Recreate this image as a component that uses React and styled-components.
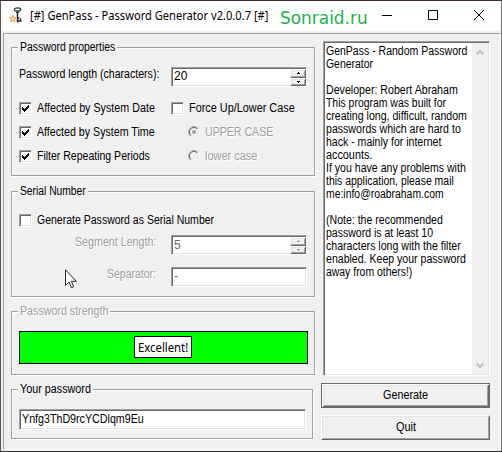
import { useLayoutEffect, useRef, useState } from "react"
import styled, { createGlobalStyle, css } from "styled-components"

//#region styled
const GlobalStyle = createGlobalStyle`
  * {
    box-sizing: border-box;
  }

  body {
    margin: 0;
    font-family: "Liberation Sans", Arial, sans-serif;
    font-size: 12px;
    line-height: 13px;
    color: #000;
    cursor: default;
  }
`

const sunken = css`
  border: 1px solid;
  border-color: #a0a0a0 #fff #fff #a0a0a0;
  box-shadow: inset 1px 1px #696969, inset -1px -1px #e3e3e3;
`

const raised = css`
  border: 1px solid;
  border-color: #fff #696969 #696969 #fff;
  box-shadow: inset 1px 1px #e3e3e3, inset -1px -1px #a0a0a0;
`

const Window = styled.div`
  position: relative;
  display: flex;
  flex-direction: column;
  width: 502px;
  height: 452px;
  border: 1px solid;
  border-color: #3a2a29 #707070 #34292d #6b4e49;
  background: #f0f0f0;
`

const TitleBar = styled.header`
  display: flex;
  height: 30px;
  flex: none;
  padding-left: 8px;
  background: #fff;
`

const TitleIcon = styled.svg`
  width: 16px;
  height: 17px;
  margin: 6px 5px 0 0;
`

const Title = styled.div`
  width: 250px;
  padding-top: 6px;
  font-family: "Noto Sans", "Open Sans", sans-serif;
  font-size: 12px;
  line-height: 17px;
`

const Site = styled.div`
  width: 101px;
  padding-top: 5px;
  font-family: "DejaVu Sans", Verdana, sans-serif;
  font-size: 17.5px;
  line-height: 24px;
  color: #22b14c;
`

const Controls = styled.svg`
  width: 104px;
  height: 12px;
  margin-top: 8px;
`

const Client = styled.main`
  display: flex;
  flex: 1;
  margin: 2px 0 1px 2px;
  padding-left: 7px;
  border: 1px solid;
  border-color: #a0a0a0 #fff #fff #a0a0a0;
`

const Settings = styled.div`
  width: 310px;
  padding-top: 13px;
`

const Side = styled.div`
  display: flex;
  flex-direction: column;
  align-items: flex-end;
  width: 169px;
  padding-top: 7px;
`

const Group = styled.section`
  width: ${p => p.$width || 304}px;
  height: ${p => p.$height}px;
  margin-bottom: ${p => p.$gap || 0}px;
  padding-left: 7px;
  border: 1px solid #a0a0a0;
  box-shadow: 1px 1px #fff, inset 1px 1px #fff;
`

const Legend = styled.h2`
  width: fit-content;
  height: 14px;
  margin: -8px 0 ${p => p.$gap}px -1px;
  padding: 1px 2px 0;
  font: inherit;
  background: #f0f0f0;
`

const Ink = styled.span`
  display: inline-block;
  width: ${p => p.$width}px;
  height: 13px;
  white-space: pre;
  flex: none;
  color: ${p => (p.$disabled ? "#a0a0a0" : "inherit")};
  text-shadow: ${p => (p.$disabled ? "1px 1px #fff" : "none")};
`

const Glyphs = styled.span`
  display: inline-block;
  transform-origin: 0 50%;
`

const Field = styled.div`
  display: flex;
  height: 20px;
  margin-bottom: ${p => p.$gap || 0}px;
`

const FieldLabel = styled.div`
  display: flex;
  justify-content: ${p => (p.$right ? "flex-end" : "flex-start")};
  width: 152px;
  padding: ${p => (p.$right ? "1px 15px 0 0" : "1px 0 0 0")};
`

const Input = styled.div`
  display: flex;
  justify-content: space-between;
  width: ${p => p.$width || 136}px;
  height: ${p => p.$height || 20}px;
  padding: ${p => p.$top || 2}px 0 0 2px;
  background: #fff;
  color: ${p => (p.$disabled ? "#6d6d6d" : "#000")};
  ${sunken}
`

const Spinner = styled.div`
  display: flex;
  flex-direction: column;
  width: 16px;
  height: 17px;
  margin-top: ${p => (p.$disabled ? -2 : -1)}px;
`

const SpinButton = styled.div`
  display: flex;
  align-items: center;
  justify-content: center;
  flex: 1;
  background: #f0f0f0;
  color: ${p => (p.$disabled ? "#a0a0a0" : "#000")};
  ${raised}

  svg {
    width: 3px;
    height: 2px;
  }
`

const Columns = styled.div`
  display: grid;
  grid-template-columns: 152px 1fr;
`

const Options = styled.div`
  display: flex;
  flex-direction: column;
  gap: 11px;
`

const Option = styled.div`
  display: flex;
  gap: ${p => p.$gap || 5}px;
  height: 13px;
  margin-left: ${p => p.$indent || 0}px;
  margin-bottom: ${p => p.$below || 0}px;
`

const Box = styled.div`
  width: 13px;
  height: 13px;
  background: #fff;
  ${sunken}

  svg {
    display: block;
    width: 11px;
    height: 11px;
  }
`

const RadioMark = styled.svg`
  width: 13px;
  height: 13px;
`

const Meter = styled.div`
  display: flex;
  width: 289px;
  height: 33px;
  padding: 4px 0 0 114px;
  border: 1px solid #000;
  background: #0f0;
`

const Rating = styled.div`
  width: 58px;
  height: 22px;
  padding: 4px 0 0 3px;
  border: 1px solid #000;
  background: #fff;
  font-family: "Noto Sans", "Open Sans", sans-serif;
`

const Memo = styled.div`
  display: flex;
  justify-content: space-between;
  width: 167px;
  height: 335px;
  margin-bottom: 7px;
  padding: 1px;
  background: #fff;
  ${sunken}
`

const MemoText = styled.div`
  display: flex;
  flex-direction: column;
  padding: 2px 0 0 1px;
`

const ScrollBar = styled.div`
  display: flex;
  flex-direction: column;
  justify-content: space-between;
  align-items: center;
  width: 16px;
  padding: 6px 1px 5px 0;
  background: #f0f0f0;

  svg {
    width: 8px;
    height: 7px;
  }
`

const Button = styled.div`
  display: flex;
  justify-content: center;
  align-items: center;
  width: 169px;
  height: 25px;
  margin-bottom: 7px;
  ${raised}
  ${p =>
    p.$focused &&
    css`
      border-color: #696969;
      box-shadow: inset 1px 1px #fff, inset -1px -1px #696969, inset 2px 2px #e3e3e3,
        inset -2px -2px #a0a0a0;
    `}
`

const Pointer = styled.svg`
  position: absolute;
  left: 64px;
  top: 268px;
  width: 13px;
  height: 20px;
`
//#endregion

// Condenses the glyphs to the width the caption takes in the dialog font
const Caption = ({ width, disabled, children }) => {
  const ref = useRef(null)
  const [scale, setScale] = useState(1)

  useLayoutEffect(() => {
    if (ref.current.offsetWidth) setScale(width / ref.current.offsetWidth)
  }, [width, children])

  return (
    <Ink $width={width} $disabled={disabled}>
      <Glyphs ref={ref} style={{ transform: `scaleX(${scale})` }}>{children}</Glyphs>
    </Ink>
  )
}

const Check = ({ label, width, checked, below }) => (
  <Option $below={below}>
    <Box>
      {checked && (
        <svg viewBox="0 0 11 11" shapeRendering="crispEdges">
          <path d="M2 4h1v1h1v1h1V5h1V4h1V3h1V2h1v3H8v1H7v1H6v1H5v1H4V8H3V7H2z" />
        </svg>
      )}
    </Box>
    <Caption width={width}>{label}</Caption>
  </Option>
)

const Radio = ({ label, width, selected }) => (
  <Option $indent={17} $gap={4}>
    <RadioMark viewBox="0 0 13 13" fill="none">
      <circle cx="6" cy="6" r="5.5" stroke="#fff" />
      <circle cx="6" cy="6" r="4.5" stroke="#e3e3e3" />
      <path d="M2.1 9.9A5.5 5.5 0 0 1 9.9 2.1" stroke="#a0a0a0" />
      <path d="M2.8 9.2A4.5 4.5 0 0 1 9.2 2.8" stroke="#696969" />
      {selected && <circle cx="6" cy="6" r="2" fill="#a0a0a0" />}
    </RadioMark>
    <Caption width={width} disabled>{label}</Caption>
  </Option>
)

const Spin = ({ disabled }) => (
  <Spinner $disabled={disabled}>
    <SpinButton $disabled={disabled}>
      <svg viewBox="0 0 3 2" shapeRendering="crispEdges">
        <path d="M1 0h1v1h1v1H0V1h1z" fill="currentColor" />
      </svg>
    </SpinButton>
    <SpinButton $disabled={disabled}>
      <svg viewBox="0 0 3 2" shapeRendering="crispEdges">
        <path d="M0 0h3v1H2v1H1V1H0z" fill="currentColor" />
      </svg>
    </SpinButton>
  </Spinner>
)

const memoLines = [
  ["GenPass - Random Password", 141],
  ["Generator", 47],
  ["", 0],
  ["Developer: Robert Abraham", 132],
  ["This program was built for", 120],
  ["creating long, difficult, random", 141],
  ["passwords which are hard to", 135],
  ["hack - mainly for internet", 115],
  ["accounts.", 46],
  ["If you have any problems with", 140],
  ["this application, please mail", 128],
  ["me:info@roabraham.com", 118],
  ["", 0],
  ["(Note: the recommended", 117],
  ["password is at least 10", 107],
  ["characters long with the filter", 135],
  ["enabled. Keep your password", 140],
  ["away from others!)", 86],
]

const App = () => (
  <>
    <GlobalStyle />
    <Window>
      <TitleBar>
        <TitleIcon viewBox="0 0 16 17" fill="none">
          <path d="M3.8 8.5l.9 2.3 2.3.1-1.8 1.5.6 2.4-2-1.3-2 1.3.6-2.4L.6 10.9l2.3-.1z" fill="#fbe6c4" stroke="#d99a45" />
          <ellipse cx="8.5" cy="2.5" rx="3.2" ry="1.7" stroke="#333" strokeWidth="1.2" />
          <path d="M7 5.5h3" stroke="#555" />
          <path d="M8.5 4.5v11" stroke="#222" strokeWidth="1.5" />
          <path d="M9 11h1.5M9 14h3.5M11.5 11.5v3" stroke="#222" strokeWidth="1.3" />
        </TitleIcon>
        <Title>
          <Caption width={238}>[#] GenPass - Password Generator v2.0.0.7 [#]</Caption>
        </Title>
        <Site>
          <Caption width={88}>Sonraid.ru</Caption>
        </Site>
        <Controls viewBox="0 0 104 12" fill="none" stroke="#000">
          <path d="M1 6.5h10" />
          <path d="M47.5 1.5h9v9h-9z" />
          <path d="M93 1l10 10M103 1L93 11" />
        </Controls>
      </TitleBar>
      <Client>
        <Settings>
          <Group $height={129} $gap={15}>
            <Legend $gap={13}>
              <Caption width={95}>Password properties</Caption>
            </Legend>
            <Field $gap={15}>
              <FieldLabel>
                <Caption width={140}>Password length (characters):</Caption>
              </FieldLabel>
              <Input>
                <Caption width={13}>20</Caption>
                <Spin />
              </Input>
            </Field>
            <Columns>
              <Options>
                <Check label="Affected by System Date" width={118} checked />
                <Check label="Affected by System Time" width={118} checked />
                <Check label="Filter Repeating Periods" width={113} checked />
              </Options>
              <Options>
                <Check label="Force Up/Lower Case" width={106} />
                <Radio label="UPPER CASE" width={68} selected />
                <Radio label="lower case" width={52} />
              </Options>
            </Columns>
          </Group>
          <Group $height={106} $gap={14}>
            <Legend $gap={16}>
              <Caption width={66}>Serial Number</Caption>
            </Legend>
            <Check label="Generate Password as Serial Number" width={177} below={8} />
            <Field $gap={12}>
              <FieldLabel $right>
                <Caption width={81} disabled>Segment Length:</Caption>
              </FieldLabel>
              <Input $disabled $top={3}>
                <Caption width={7}>5</Caption>
                <Spin disabled />
              </Input>
            </Field>
            <Field>
              <FieldLabel $right>
                <Caption width={49} disabled>Separator:</Caption>
              </FieldLabel>
              <Input $disabled>
                <Caption width={4}>-</Caption>
              </Input>
            </Field>
          </Group>
          <Group $height={64} $gap={14}>
            <Legend $gap={13}>
              <Caption width={88} disabled>Password strength</Caption>
            </Legend>
            <Meter>
              <Rating>
                <Caption width={50}>Excellent!</Caption>
              </Rating>
            </Meter>
          </Group>
          <Group $height={50} $width={302}>
            <Legend $gap={13}>
              <Caption width={71}>Your password</Caption>
            </Legend>
            <Input $width={287} $height={21} $top={3}>
              <Caption width={122}>Ynfg3ThD9rcYCDlqm9Eu</Caption>
            </Input>
          </Group>
        </Settings>
        <Side>
          <Memo>
            <MemoText>
              {memoLines.map(([text, width], i) => (
                <Caption key={i} width={width}>{text}</Caption>
              ))}
            </MemoText>
            <ScrollBar>
              <svg viewBox="0 0 8 7" fill="none" stroke="#bfbfbf" strokeWidth="2">
                <path d="M.7 5.5L4 2l3.3 3.5" />
              </svg>
              <svg viewBox="0 0 8 7" fill="none" stroke="#bfbfbf" strokeWidth="2">
                <path d="M.7 1.5L4 5l3.3-3.5" />
              </svg>
            </ScrollBar>
          </Memo>
          <Button $focused>
            <Caption width={45}>Generate</Caption>
          </Button>
          <Button>
            <Caption width={20}>Quit</Caption>
          </Button>
        </Side>
      </Client>
      <Pointer viewBox="0 0 13 20">
        <path d="M.5.8v15.6l3.6-3.4 2.300 5.700 2.300-1-2.300-5.400h5z" fill="#fff" stroke="#222" />
      </Pointer>
    </Window>
  </>
)

export default App
